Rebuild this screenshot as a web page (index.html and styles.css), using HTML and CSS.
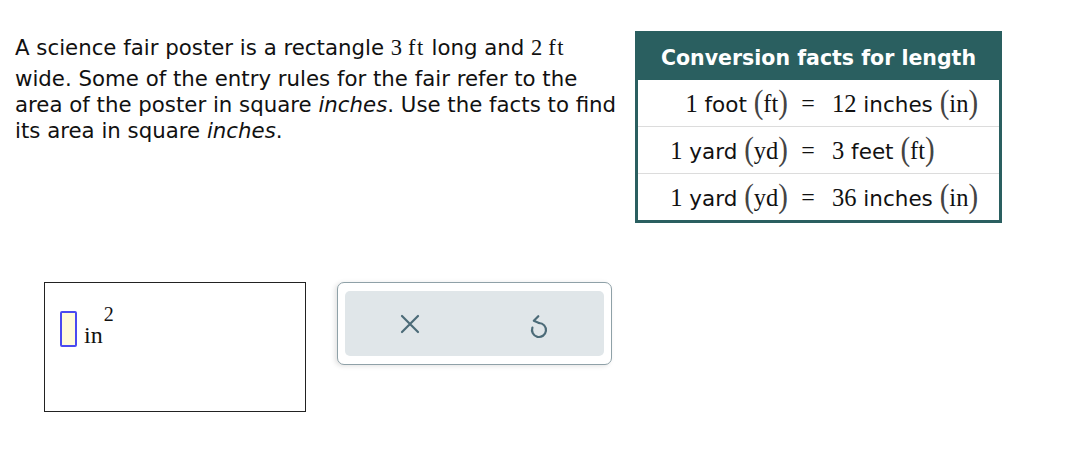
FILE: index.html
```html
<!DOCTYPE html>
<html>
<head>
<meta charset="utf-8">
<link rel="stylesheet" href="styles.css">
</head>
<body>
<div class="top">
  <div class="problem">
    <p>A science fair poster is a rectangle <span class="m">3<span class="u">ft</span></span> long and <span class="m">2<span class="u">ft</span></span> wide. Some of the entry rules for the fair refer to the area of the poster in square <i>inches</i>. Use the facts to find its area in square <i>inches</i>.</p>
  </div>
  <div class="facts">
    <div class="facts-head">Conversion facts for length</div>
    <div class="facts-row">
      <span class="lhs"><span class="m">1</span> foot <span class="p">(</span><span class="m">ft</span><span class="p">)</span></span>
      <span class="eq">=</span>
      <span class="rhs"><span class="m">12</span> inches <span class="p">(</span><span class="m">in</span><span class="p">)</span></span>
    </div>
    <div class="facts-row">
      <span class="lhs"><span class="m">1</span> yard <span class="p">(</span><span class="m">yd</span><span class="p">)</span></span>
      <span class="eq">=</span>
      <span class="rhs"><span class="m">3</span> feet <span class="p">(</span><span class="m">ft</span><span class="p">)</span></span>
    </div>
    <div class="facts-row">
      <span class="lhs"><span class="m">1</span> yard <span class="p">(</span><span class="m">yd</span><span class="p">)</span></span>
      <span class="eq">=</span>
      <span class="rhs"><span class="m">36</span> inches <span class="p">(</span><span class="m">in</span><span class="p">)</span></span>
    </div>
  </div>
</div>
<div class="bottom">
  <div class="answer">
    <span class="input"></span><span class="unit">in</span><span class="sup">2</span>
  </div>
  <div class="tools">
    <div class="tools-inner">
      <button class="tool" aria-label="clear">
        <svg width="36" height="36" viewBox="0 0 36 36"><path d="M10 10 L26 26 M26 10 L10 26" stroke="#4c6b78" stroke-width="2.2" stroke-linecap="round" fill="none"/></svg>
      </button>
      <button class="tool" aria-label="undo">
        <svg width="36" height="36" viewBox="0 0 36 36"><path d="M18 17 A7 7 0 1 1 11.4 21.6" stroke="#4c6b78" stroke-width="2.2" stroke-linecap="round" fill="none"/><path d="M17.3 10.2 L12.8 14.8 L18 17" stroke="#4c6b78" stroke-width="2.2" stroke-linecap="round" stroke-linejoin="round" fill="none"/></svg>
      </button>
    </div>
  </div>
</div>
</body>
</html>
```
FILE: styles.css
```css
html, body {
  margin: 0;
  padding: 0;
  background: #fff;
}
body {
  font-family: "DejaVu Sans", Verdana, sans-serif;
  color: #111;
  width: 1068px;
  height: 468px;
  overflow: hidden;
}
.top {
  display: flex;
  padding: 31px 0 0 15px;
}
.problem {
  width: 620px;
  flex: none;
}
.problem p {
  margin: 4px 0 0 0;
  width: 607px;
  font-size: 21.3px;
  line-height: 26px;
}
.problem .m {
  display: inline-block;
  line-height: 26px;
  margin-bottom: 5px;
  font-size: 22.5px;
}
.u {
  margin-left: 6px;
  letter-spacing: 1.5px;
}
.m {
  font-family: "Liberation Serif", "Times New Roman", serif;
  font-size: 24.5px;
}
.facts {
  width: 361px;
  border: 3px solid #2a5f60;
  flex: none;
}
.facts-head {
  background: #2a5f60;
  color: #fff;
  font-weight: bold;
  font-size: 20.5px;
  height: 46px;
  display: flex;
  align-items: center;
  justify-content: center;
  padding-top: 1px;
  box-sizing: border-box;
}
.facts-row {
  display: grid;
  grid-template-columns: 150px 40px 1fr;
  align-items: center;
  height: 47px;
  font-size: 21.5px;
  border-top: 1px solid #dcdcdc;
  box-sizing: border-box;
}
.facts-row:nth-child(2) {
  border-top: none;
  height: 46px;
}
.lhs {
  text-align: right;
  white-space: nowrap;
}
.rhs {
  white-space: nowrap;
  padding-left: 4px;
}
.eq {
  text-align: center;
  font-family: "Liberation Serif", serif;
  font-size: 24px;
}
.p {
  font-family: "Liberation Serif", serif;
  font-size: 29px;
  color: #444;
  display: inline-block;
  transform: scaleY(1.15);
  line-height: 1;
}
.bottom {
  display: flex;
  align-items: flex-start;
  padding-left: 44px;
  margin-top: 59px;
  gap: 31px;
}
.answer {
  width: 262px;
  height: 130px;
  border: 1px solid #222;
  box-sizing: border-box;
  display: flex;
  align-items: flex-start;
  padding: 28px 0 0 15px;
}
.input {
  display: inline-block;
  width: 17px;
  height: 36px;
  box-sizing: border-box;
  border: 2px solid #4a4af0;
  border-radius: 2px;
  background: #fffbdb;
  flex: none;
}
.unit {
  font-family: "Liberation Serif", serif;
  font-size: 24px;
  line-height: 24px;
  margin-left: 7px;
  margin-top: 12px;
}
.sup {
  font-family: "Liberation Serif", serif;
  font-size: 20px;
  line-height: 20px;
  margin-left: 1px;
  margin-top: -7px;
}
.tools {
  width: 275px;
  height: 83px;
  box-sizing: border-box;
  border: 1px solid #8fa1a8;
  border-radius: 7px;
  padding: 8px 7px;
  box-shadow: -2px 1px 5px rgba(0,0,0,0.12);
  background: #fff;
}
.tools-inner {
  height: 100%;
  background: #e0e6e9;
  border-radius: 5px;
  display: flex;
  justify-content: space-around;
  align-items: center;
}
.tool {
  background: none;
  border: none;
  padding: 0;
  width: 36px;
  height: 36px;
  display: flex;
  align-items: center;
  justify-content: center;
}
```
